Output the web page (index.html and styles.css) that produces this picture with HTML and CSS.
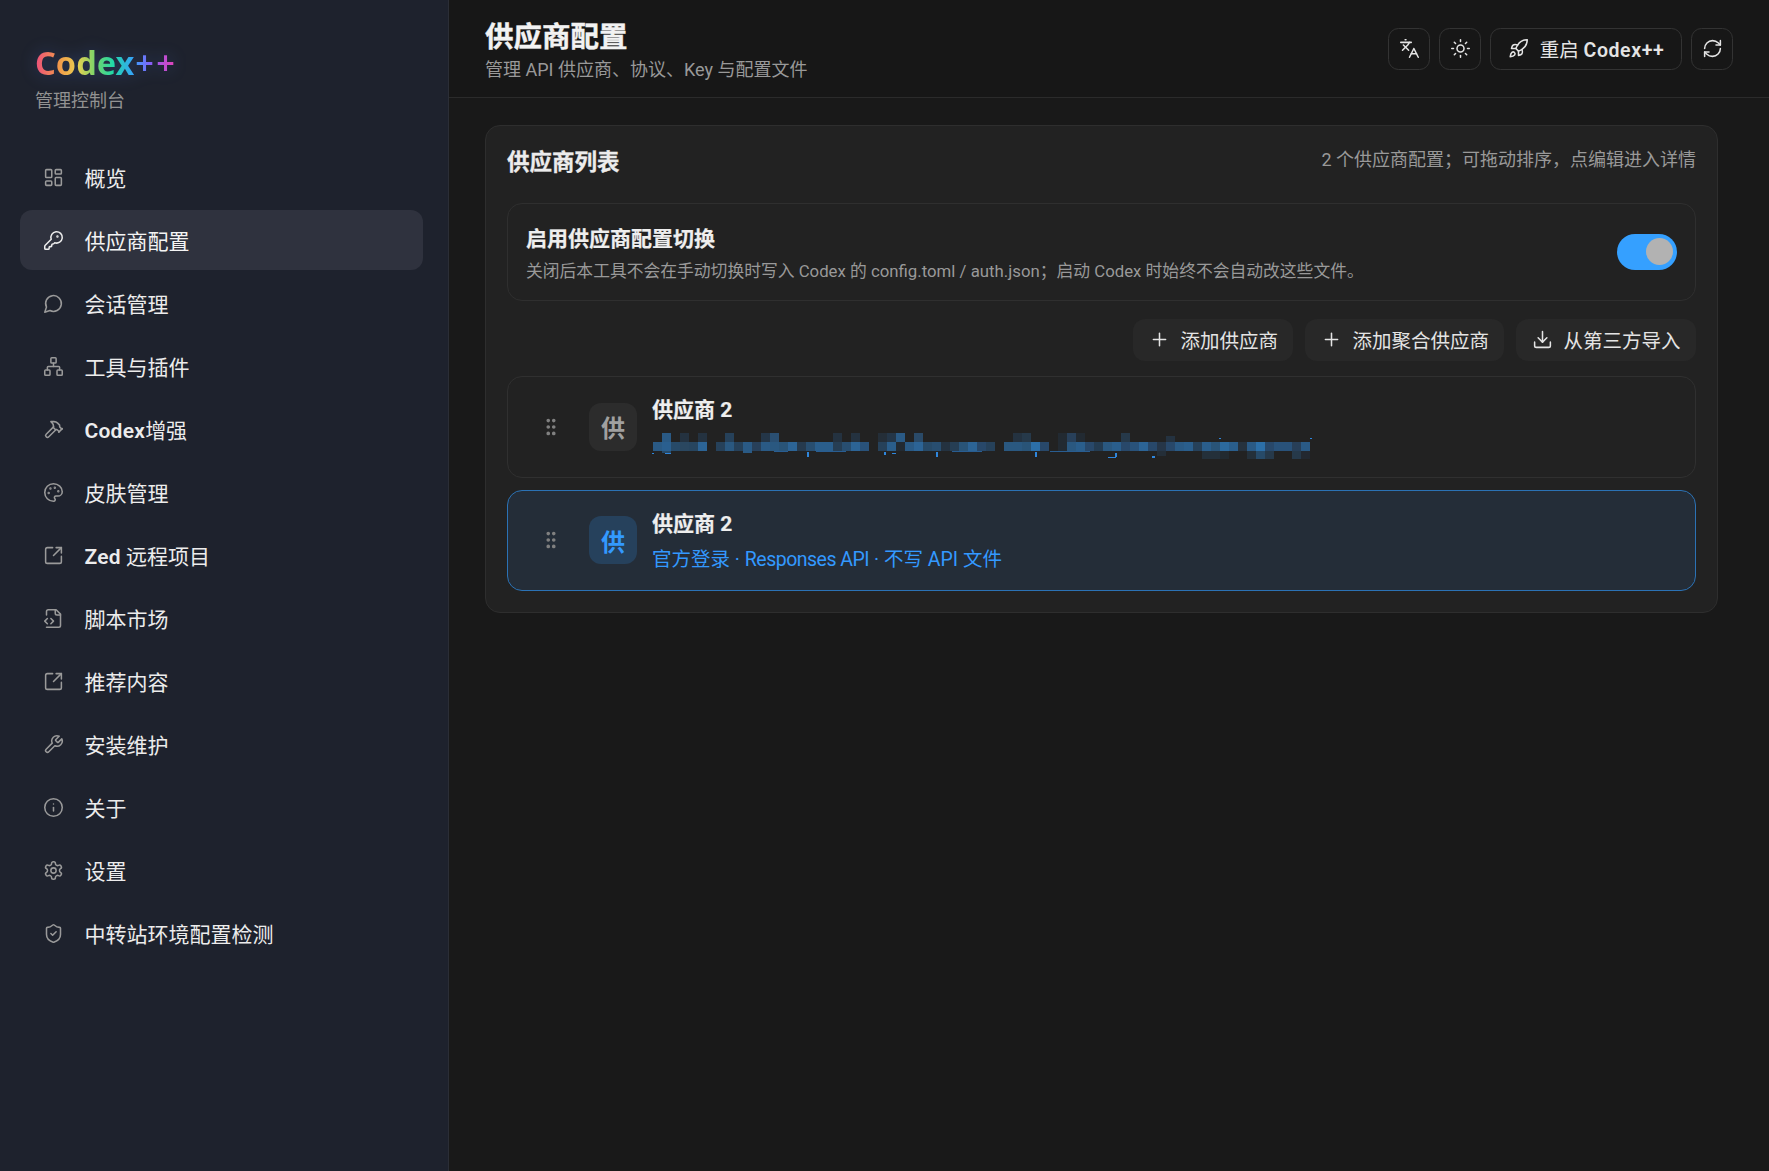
FILE: index.html
```html
<!DOCTYPE html>
<html lang="zh-CN">
<head>
<meta charset="utf-8">
<title>Codex++ 管理控制台</title>
<link rel="stylesheet" href="styles.css">
</head>
<body>
<div class="app">
  <aside class="sidebar">
    <div class="brand">
      <div class="logo">Codex<span class="pp">++</span></div>
      <div class="brand-sub">管理控制台</div>
    </div>
    <nav class="nav">
      <a class="nav-item"><svg class="ico" viewBox="0 0 24 24"><rect width="7" height="9" x="3" y="3" rx="1"/><rect width="7" height="5" x="14" y="3" rx="1"/><rect width="7" height="9" x="14" y="12" rx="1"/><rect width="7" height="5" x="3" y="16" rx="1"/></svg><span>概览</span></a>
      <a class="nav-item active"><svg class="ico" viewBox="0 0 24 24"><path d="M2.586 17.414A2 2 0 0 0 2 18.828V21a1 1 0 0 0 1 1h3a1 1 0 0 0 1-1v-1a1 1 0 0 1 1-1h1a1 1 0 0 0 1-1v-1a1 1 0 0 1 1-1h.172a2 2 0 0 0 1.414-.586l.814-.814a6.5 6.5 0 1 0-4-4z"/><circle cx="16.5" cy="7.5" r=".5" fill="currentColor"/></svg><span>供应商配置</span></a>
      <a class="nav-item"><svg class="ico" viewBox="0 0 24 24"><path d="M7.9 20A9 9 0 1 0 4 16.1L2 22Z"/></svg><span>会话管理</span></a>
      <a class="nav-item"><svg class="ico" viewBox="0 0 24 24"><rect x="16" y="16" width="6" height="6" rx="1"/><rect x="2" y="16" width="6" height="6" rx="1"/><rect x="9" y="2" width="6" height="6" rx="1"/><path d="M5 16v-3a1 1 0 0 1 1-1h12a1 1 0 0 1 1 1v3"/><path d="M12 12V8"/></svg><span>工具与插件</span></a>
      <a class="nav-item"><svg class="ico" viewBox="0 0 24 24"><path d="m15 12-8.373 8.373a1 1 0 1 1-3-3L12 9"/><path d="m18 15 4-4"/><path d="m21.5 11.5-1.914-1.914A2 2 0 0 1 19 8.172V7l-2.26-2.26a6 6 0 0 0-4.202-1.756L9 2.96l.92.82A6.18 6.18 0 0 1 12 8.4V10l2 2h1.172a2 2 0 0 1 1.414.586L18.5 14.5"/></svg><span><b class="lat">Codex</b>增强</span></a>
      <a class="nav-item"><svg class="ico" viewBox="0 0 24 24"><path d="M12 22a1 1 0 0 1 0-20 10 9 0 0 1 10 9 5 5 0 0 1-5 5h-2.25a1.75 1.75 0 0 0-1.4 2.8l.3.4a1.75 1.75 0 0 1-1.4 2.8z"/><circle cx="13.5" cy="6.5" r=".5" fill="currentColor"/><circle cx="17.5" cy="10.5" r=".5" fill="currentColor"/><circle cx="6.5" cy="12.5" r=".5" fill="currentColor"/><circle cx="8.5" cy="7.5" r=".5" fill="currentColor"/></svg><span>皮肤管理</span></a>
      <a class="nav-item"><svg class="ico" viewBox="0 0 24 24"><path d="M21 13v6a2 2 0 0 1-2 2H5a2 2 0 0 1-2-2V5a2 2 0 0 1 2-2h6"/><path d="m21 3-9 9"/><path d="M15 3h6v6"/></svg><span><b class="lat">Zed</b> 远程项目</span></a>
      <a class="nav-item"><svg class="ico" viewBox="0 0 24 24"><path d="M4 22h14a2 2 0 0 0 2-2V7l-5-5H6a2 2 0 0 0-2 2v4"/><path d="M14 2v4a2 2 0 0 0 2 2h4"/><path d="m5 12-3 3 3 3"/><path d="m9 18 3-3-3-3"/></svg><span>脚本市场</span></a>
      <a class="nav-item"><svg class="ico" viewBox="0 0 24 24"><path d="M21 13v6a2 2 0 0 1-2 2H5a2 2 0 0 1-2-2V5a2 2 0 0 1 2-2h6"/><path d="m21 3-9 9"/><path d="M15 3h6v6"/></svg><span>推荐内容</span></a>
      <a class="nav-item"><svg class="ico" viewBox="0 0 24 24"><path d="M14.7 6.3a1 1 0 0 0 0 1.4l1.6 1.6a1 1 0 0 0 1.4 0l3.77-3.77a6 6 0 0 1-7.94 7.94l-6.91 6.91a2.12 2.12 0 0 1-3-3l6.91-6.91a6 6 0 0 1 7.94-7.94l-3.76 3.76z"/></svg><span>安装维护</span></a>
      <a class="nav-item"><svg class="ico" viewBox="0 0 24 24"><circle cx="12" cy="12" r="10"/><path d="M12 16v-4"/><path d="M12 8h.01"/></svg><span>关于</span></a>
      <a class="nav-item"><svg class="ico" viewBox="0 0 24 24"><path d="M12.22 2h-.44a2 2 0 0 0-2 2v.18a2 2 0 0 1-1 1.73l-.43.25a2 2 0 0 1-2 0l-.15-.08a2 2 0 0 0-2.73.73l-.22.38a2 2 0 0 0 .73 2.73l.15.1a2 2 0 0 1 1 1.72v.51a2 2 0 0 1-1 1.74l-.15.09a2 2 0 0 0-.73 2.73l.22.38a2 2 0 0 0 2.73.73l.15-.08a2 2 0 0 1 2 0l.43.25a2 2 0 0 1 1 1.73V20a2 2 0 0 0 2 2h.44a2 2 0 0 0 2-2v-.18a2 2 0 0 1 1-1.73l.43-.25a2 2 0 0 1 2 0l.15.08a2 2 0 0 0 2.73-.73l.22-.39a2 2 0 0 0-.73-2.73l-.15-.08a2 2 0 0 1-1-1.74v-.5a2 2 0 0 1 1-1.74l.15-.09a2 2 0 0 0 .73-2.73l-.22-.38a2 2 0 0 0-2.73-.73l-.15.08a2 2 0 0 1-2 0l-.43-.25a2 2 0 0 1-1-1.73V4a2 2 0 0 0-2-2z"/><circle cx="12" cy="12" r="3"/></svg><span>设置</span></a>
      <a class="nav-item"><svg class="ico" viewBox="0 0 24 24"><path d="M20 13c0 5-3.5 7.5-7.66 8.95a1 1 0 0 1-.67-.01C7.5 20.5 4 18 4 13V6a1 1 0 0 1 1-1c2 0 4.5-1.2 6.24-2.72a1.17 1.17 0 0 1 1.52 0C14.51 3.81 17 5 19 5a1 1 0 0 1 1 1z"/><path d="m9 12 2 2 4-4"/></svg><span>中转站环境配置检测</span></a>
    </nav>
  </aside>

  <main class="main">
    <header class="topbar">
      <div class="top-titles">
        <h1 class="page-title">供应商配置</h1>
        <p class="page-sub">管理 API 供应商、协议、Key 与配置文件</p>
      </div>
      <div class="top-actions">
        <button class="tbtn square"><svg class="ico" viewBox="0 0 24 24"><path d="m5 8 6 6"/><path d="m4 14 6-6 2-3"/><path d="M2 5h12"/><path d="M7 2h1"/><path d="m22 22-5-10-5 10"/><path d="M14 18h6"/></svg></button>
        <button class="tbtn square"><svg class="ico" viewBox="0 0 24 24"><circle cx="12" cy="12" r="4"/><path d="M12 2v2"/><path d="M12 20v2"/><path d="m4.93 4.93 1.41 1.41"/><path d="m17.66 17.66 1.41 1.41"/><path d="M2 12h2"/><path d="M20 12h2"/><path d="m6.34 17.66-1.41 1.41"/><path d="m19.07 4.93-1.41 1.41"/></svg></button>
        <button class="tbtn wide"><svg class="ico" viewBox="0 0 24 24"><path d="M4.5 16.5c-1.5 1.26-2 5-2 5s3.74-.5 5-2c.71-.84.7-2.13-.09-2.91a2.18 2.18 0 0 0-2.91-.09z"/><path d="m12 15-3-3a22 22 0 0 1 2-3.95A12.88 12.88 0 0 1 22 2c0 2.72-.78 7.5-6 11a22.35 22.35 0 0 1-4 2z"/><path d="M9 12H4s.55-3.03 2-4c1.62-1.08 5 0 5 0"/><path d="M12 15v5s3.03-.55 4-2c1.08-1.62 0-5 0-5"/></svg><span>重启 <b class="lat">Codex++</b></span></button>
        <button class="tbtn square"><svg class="ico" viewBox="0 0 24 24"><path d="M3 12a9 9 0 0 1 9-9 9.75 9.75 0 0 1 6.74 2.74L21 8"/><path d="M21 3v5h-5"/><path d="M21 12a9 9 0 0 1-9 9 9.75 9.75 0 0 1-6.74-2.74L3 16"/><path d="M8 16H3v5"/></svg></button>
      </div>
    </header>

    <div class="content">
      <section class="card">
        <div class="card-head">
          <h2 class="card-title">供应商列表</h2>
          <span class="card-note">2 个供应商配置；可拖动排序，点编辑进入详情</span>
        </div>

        <div class="switch-panel">
          <div class="switch-text">
            <div class="switch-title">启用供应商配置切换</div>
            <div class="switch-desc">关闭后本工具不会在手动切换时写入 Codex 的 config.toml / auth.json；启动 Codex 时始终不会自动改这些文件。</div>
          </div>
          <div class="toggle"><span class="knob"></span></div>
        </div>

        <div class="actions">
          <button class="abtn"><svg class="ico" viewBox="0 0 24 24"><path d="M5 12h14"/><path d="M12 5v14"/></svg><span>添加供应商</span></button>
          <button class="abtn"><svg class="ico" viewBox="0 0 24 24"><path d="M5 12h14"/><path d="M12 5v14"/></svg><span>添加聚合供应商</span></button>
          <button class="abtn"><svg class="ico" viewBox="0 0 24 24"><path d="M12 15V3"/><path d="M21 15v4a2 2 0 0 1-2 2H5a2 2 0 0 1-2-2v-4"/><path d="m7 10 5 5 5-5"/></svg><span>从第三方导入</span></button>
        </div>

        <div class="rows">
          <div class="row">
            <svg class="grip" viewBox="0 0 24 24"><circle cx="9" cy="12" r="1"/><circle cx="9" cy="5" r="1"/><circle cx="9" cy="19" r="1"/><circle cx="15" cy="12" r="1"/><circle cx="15" cy="5" r="1"/><circle cx="15" cy="19" r="1"/></svg>
            <div class="avatar">供</div>
            <div class="row-body">
              <div class="row-title">供应商 2</div>
              <svg class="mosaic" viewBox="0 0 662 28" aria-label="已打码的文字">
                <g>
                  <rect x="10" y="1" width="9" height="9" fill="#2a5a85"/><rect x="28" y="1" width="9" height="9" fill="#243240"/><rect x="46" y="1" width="9" height="9" fill="#243240"/><rect x="73" y="1" width="9" height="9" fill="#26415a"/><rect x="109" y="1" width="9" height="9" fill="#243648"/><rect x="118" y="1" width="9" height="9" fill="#2a4f72"/><rect x="181" y="1" width="9" height="9" fill="#243240"/><rect x="199" y="1" width="9" height="9" fill="#243240"/><rect x="226" y="1" width="9" height="9" fill="#242e38"/><rect x="235" y="1" width="9" height="9" fill="#243648"/><rect x="244" y="1" width="9" height="9" fill="#2a5a85"/><rect x="262" y="1" width="9" height="9" fill="#2a4a68"/><rect x="361" y="1" width="9" height="9" fill="#243240"/><rect x="370" y="1" width="9" height="9" fill="#26394a"/><rect x="406" y="1" width="9" height="9" fill="#222a32"/><rect x="415" y="1" width="9" height="9" fill="#28405a"/><rect x="424" y="1" width="9" height="9" fill="#222a32"/><rect x="469" y="1" width="9" height="9" fill="#26394a"/><rect x="514" y="4" width="9" height="6" fill="#243240"/>
                </g>
                <g>
                  <rect x="1" y="10" width="9" height="9" fill="#2a5a85"/><rect x="10" y="10" width="9" height="9" fill="#2a5f8f"/><rect x="19" y="10" width="9" height="9" fill="#274a68"/><rect x="28" y="10" width="9" height="9" fill="#2a4760"/><rect x="37" y="10" width="9" height="9" fill="#27455f"/><rect x="46" y="10" width="9" height="9" fill="#2c6496"/><rect x="64" y="10" width="9" height="9" fill="#26415a"/><rect x="73" y="10" width="9" height="9" fill="#2a5880"/><rect x="82" y="10" width="9" height="9" fill="#26415a"/><rect x="91" y="10" width="9" height="11" fill="#2a5a85"/><rect x="100" y="10" width="9" height="9" fill="#28405a"/><rect x="109" y="10" width="9" height="9" fill="#2a5a85"/><rect x="118" y="10" width="9" height="9" fill="#2a5880"/><rect x="127" y="10" width="9" height="9" fill="#295478"/><rect x="136" y="10" width="9" height="9" fill="#2c6496"/><rect x="145" y="10" width="9" height="9" fill="#263a4e"/><rect x="154" y="10" width="9" height="9" fill="#284e70"/><rect x="163" y="10" width="9" height="9" fill="#2a5e8c"/><rect x="172" y="10" width="9" height="9" fill="#2a5e8c"/><rect x="181" y="10" width="9" height="9" fill="#263e54"/><rect x="190" y="10" width="9" height="9" fill="#284e70"/><rect x="199" y="10" width="9" height="9" fill="#2c6496"/><rect x="208" y="10" width="9" height="9" fill="#29527a"/><rect x="226" y="10" width="9" height="9" fill="#26415a"/><rect x="235" y="10" width="9" height="9" fill="#2a5e8c"/><rect x="244" y="10" width="9" height="9" fill="#222a32"/><rect x="253" y="10" width="9" height="9" fill="#2a5a85"/><rect x="262" y="10" width="9" height="9" fill="#2c6496"/><rect x="271" y="10" width="9" height="9" fill="#274a68"/><rect x="280" y="10" width="9" height="9" fill="#284e70"/><rect x="289" y="10" width="9" height="9" fill="#243240"/><rect x="298" y="10" width="9" height="9" fill="#263e54"/><rect x="307" y="10" width="9" height="9" fill="#295478"/><rect x="316" y="10" width="9" height="9" fill="#2c6496"/><rect x="325" y="10" width="9" height="9" fill="#28486a"/><rect x="334" y="10" width="9" height="9" fill="#26415a"/><rect x="352" y="10" width="9" height="9" fill="#2a5880"/><rect x="361" y="10" width="9" height="9" fill="#2a5880"/><rect x="370" y="10" width="9" height="9" fill="#295478"/><rect x="379" y="10" width="9" height="9" fill="#2c6fa8"/><rect x="388" y="10" width="9" height="9" fill="#28486a"/><rect x="406" y="10" width="9" height="9" fill="#222a32"/><rect x="415" y="10" width="9" height="9" fill="#2a5880"/><rect x="424" y="10" width="9" height="9" fill="#2a5e8c"/><rect x="433" y="10" width="9" height="9" fill="#28486a"/><rect x="442" y="10" width="9" height="9" fill="#243c52"/><rect x="451" y="10" width="9" height="9" fill="#2a5880"/><rect x="460" y="10" width="9" height="9" fill="#2a5e8c"/><rect x="469" y="10" width="9" height="9" fill="#28486a"/><rect x="478" y="10" width="9" height="9" fill="#29527a"/><rect x="487" y="10" width="9" height="9" fill="#2c6496"/><rect x="496" y="10" width="9" height="9" fill="#28486a"/><rect x="505" y="10" width="9" height="9" fill="#263648"/><rect x="514" y="10" width="9" height="9" fill="#28486a"/><rect x="523" y="10" width="9" height="9" fill="#2a5a85"/><rect x="532" y="10" width="9" height="9" fill="#2a5e8c"/><rect x="541" y="10" width="9" height="9" fill="#26415a"/><rect x="550" y="10" width="9" height="9" fill="#2a5e8c"/><rect x="559" y="10" width="9" height="9" fill="#295478"/><rect x="568" y="10" width="9" height="9" fill="#2c6a9e"/><rect x="577" y="10" width="9" height="9" fill="#2a5e8c"/><rect x="586" y="10" width="9" height="9" fill="#26323e"/><rect x="595" y="10" width="9" height="9" fill="#2a5a85"/><rect x="604" y="10" width="9" height="9" fill="#2c6fa8"/><rect x="613" y="10" width="9" height="9" fill="#28486a"/><rect x="622" y="10" width="9" height="9" fill="#29527a"/><rect x="631" y="10" width="9" height="9" fill="#29527a"/><rect x="640" y="10" width="9" height="9" fill="#283f58"/><rect x="649" y="10" width="9" height="9" fill="#2a5a85"/>
                </g>
                <g>
                  <rect x="10" y="19" width="9" height="2" fill="#274a68"/><rect x="505" y="19" width="9" height="5" fill="#242e38"/><rect x="550" y="19" width="9" height="8" fill="#24303a"/><rect x="559" y="19" width="9" height="8" fill="#24303a"/><rect x="568" y="19" width="9" height="8" fill="#222a30"/><rect x="595" y="19" width="9" height="8" fill="#24303a"/><rect x="604" y="19" width="9" height="8" fill="#274a68"/><rect x="613" y="19" width="9" height="8" fill="#26394a"/><rect x="640" y="19" width="9" height="8" fill="#26394a"/><rect x="649" y="19" width="9" height="8" fill="#232830"/>
                </g>
                <g fill="#2f86dc">
                  <rect x="0" y="21" width="2" height="1"/><rect x="13" y="21" width="6" height="1"/><rect x="155" y="20" width="2" height="5"/><rect x="232" y="20" width="2" height="3"/><rect x="240" y="21" width="4" height="1"/><rect x="284" y="20" width="2" height="5"/><rect x="383" y="20" width="2" height="5"/><rect x="456" y="25" width="8" height="1"/><rect x="463" y="21" width="2" height="4"/><rect x="500" y="24" width="3" height="2"/><rect x="567" y="6" width="2" height="1"/><rect x="658" y="6" width="2" height="1"/>
                  <rect x="122" y="19" width="14" height="1" opacity=".6"/><rect x="164" y="19" width="30" height="1" opacity=".6"/><rect x="300" y="19" width="30" height="1" opacity=".6"/><rect x="398" y="19" width="40" height="1" opacity=".6"/>
                </g>
              </svg>
            </div>
          </div>

          <div class="row selected">
            <svg class="grip" viewBox="0 0 24 24"><circle cx="9" cy="12" r="1"/><circle cx="9" cy="5" r="1"/><circle cx="9" cy="19" r="1"/><circle cx="15" cy="12" r="1"/><circle cx="15" cy="5" r="1"/><circle cx="15" cy="19" r="1"/></svg>
            <div class="avatar">供</div>
            <div class="row-body">
              <div class="row-title">供应商 2</div>
              <div class="row-sub">官方登录 · <span class="tight">Responses API</span> · 不写 API 文件</div>
            </div>
          </div>
        </div>
      </section>
    </div>
  </main>
</div>
</body>
</html>
```
FILE: styles.css
```css
* { box-sizing: border-box; }

html, body {
  margin: 0;
  height: 100%;
  background: #191919;
  color: #f0f0f0;
  font-family: Roboto, "Noto Sans CJK SC", sans-serif;
}

.app {
  display: flex;
  height: 1171px;
  overflow: hidden;
}

.ico {
  width: 21px;
  height: 21px;
  flex: none;
  fill: none;
  stroke: currentColor;
  stroke-width: 1.75;
  stroke-linecap: round;
  stroke-linejoin: round;
}

.lat {
  font-weight: 600;
  letter-spacing: .25px;
}

.tight { letter-spacing: -.5px; }

/* sidebar */
.sidebar {
  width: 449px;
  flex: none;
  background: #1e222d;
  border-right: 1px solid #2b2e36;
}

.brand {
  padding: 40px 0 0 35px;
  height: 147px;
}

.logo {
  display: inline-block;
  font-family: "Noto Sans", sans-serif;
  font-size: 32.5px;
  line-height: 46px;
  font-weight: 700;
  background: linear-gradient(90deg, #ec4e7c 0%, #f2994a 17%, #e8d050 30%, #72d46c 43%, #20d8a8 55%, #38a0ff 70%, #8a5cf6 82%, #ec40b0 100%);
  -webkit-background-clip: text;
  background-clip: text;
  color: transparent;
  filter: drop-shadow(0 0 8px rgba(80, 130, 255, .28));
}

.pp { letter-spacing: 2.5px; margin-left: 1px; font-weight: 600; }

.brand-sub {
  margin-top: 1px;
  font-size: 18px;
  line-height: 27px;
  color: #929292;
}

.nav {
  display: flex;
  flex-direction: column;
  gap: 3px;
  padding: 0 25px 0 20px;
}

.nav-item {
  display: flex;
  align-items: center;
  gap: 20.5px;
  height: 60px;
  padding-left: 23px;
  border-radius: 12px;
  font-size: 21px;
  color: #ececec;
}

.nav-item .ico { color: #9a9a9a; }

.nav-item.active {
  background: #2f323e;
  color: #f4f4f4;
}

.nav-item.active .ico { color: #ececec; }

/* main */
.main {
  flex: 1;
  min-width: 0;
}

.topbar {
  display: flex;
  align-items: center;
  justify-content: space-between;
  height: 98px;
  padding: 0 36px;
  background: #171717;
  border-bottom: 1px solid #2b2b2b;
}

.page-title {
  margin: 4px 0 0;
  font-size: 28.5px;
  line-height: 36px;
  font-weight: 700;
  color: #f2f2f2;
  -webkit-text-stroke: .4px #f2f2f2;
}

.page-sub {
  margin: 2px 0 0;
  font-size: 18px;
  line-height: 24px;
  color: #999;
}

.top-actions {
  display: flex;
  gap: 9px;
}

.tbtn {
  display: flex;
  align-items: center;
  justify-content: center;
  height: 42px;
  padding: 0;
  background: transparent;
  border: 1px solid #333;
  border-radius: 10.5px;
  color: #e4e4e4;
  font: inherit;
  font-size: 19.5px;
}

.tbtn.square { width: 42px; }

.tbtn.wide {
  width: 192px;
  gap: 11px;
}

.tbtn .lat { letter-spacing: .6px; }

.content {
  padding: 27px 51px 0 36px;
}

.card {
  background: #222;
  border: 1px solid #2e2e2e;
  border-radius: 15px;
  padding: 21px;
}

.card-head {
  display: flex;
  align-items: flex-start;
  justify-content: space-between;
  height: 56px;
}

.card-title {
  margin: 1px 0 0;
  font-size: 22.5px;
  line-height: 28px;
  font-weight: 700;
  color: #ececec;
  -webkit-text-stroke: .3px #ececec;
}

.card-note {
  margin-top: 1px;
  font-size: 18px;
  line-height: 24px;
  color: #999;
}

.switch-panel {
  display: flex;
  align-items: center;
  justify-content: space-between;
  height: 97.5px;
  padding: 0 18px;
  border: 1px solid #2f2f2f;
  border-radius: 15px;
}

.switch-text { padding-top: 4px; }

.switch-title {
  font-size: 21px;
  line-height: 30px;
  font-weight: 700;
  color: #eee;
  -webkit-text-stroke: .2px #eee;
}

.switch-desc {
  margin-top: 5px;
  font-size: 16.8px;
  line-height: 24px;
  color: #999;
}

.toggle {
  display: flex;
  align-items: center;
  justify-content: flex-end;
  width: 60px;
  height: 36px;
  padding-right: 4px;
  border-radius: 18px;
  background: #35a0ff;
}

.knob {
  width: 27px;
  height: 27px;
  border-radius: 50%;
  background: #b2b2b2;
}

.actions {
  display: flex;
  justify-content: flex-end;
  gap: 12px;
  margin-top: 18px;
}

.abtn {
  display: flex;
  align-items: center;
  gap: 10.5px;
  height: 42px;
  padding: 0 15.5px;
  background: #282828;
  border: 0;
  border-radius: 12px;
  color: #e4e4e4;
  font: inherit;
  font-size: 19.5px;
}

.rows {
  display: flex;
  flex-direction: column;
  gap: 12px;
  margin-top: 15.5px;
}

.row {
  display: flex;
  align-items: center;
  height: 101.5px;
  padding-left: 31.5px;
  border: 1px solid #303030;
  border-radius: 15px;
}

.row.selected {
  background: #242d38;
  border-color: #2b72b5;
}

.grip {
  width: 22px;
  height: 22px;
  flex: none;
  fill: #808080;
  stroke: #808080;
  stroke-width: 2;
}

.avatar {
  display: flex;
  align-items: center;
  justify-content: center;
  width: 48px;
  height: 48px;
  flex: none;
  margin-left: 27.5px;
  border-radius: 12px;
  background: #2c2c2c;
  color: #a0a0a0;
  font-size: 24px;
  font-weight: 700;
}

.selected .avatar {
  background: #26415c;
  color: #3399ff;
}

.row-body {
  margin-left: 15px;
  min-width: 0;
  padding-top: 2px;
}

.selected .row-body { padding-top: 3px; }

.row-title {
  font-size: 21px;
  line-height: 30px;
  font-weight: 700;
  color: #eee;
  -webkit-text-stroke: .2px #eee;
}

.row-sub {
  margin-top: 6.5px;
  font-size: 19.5px;
  line-height: 30px;
  color: #3399ff;
}

.mosaic {
  display: block;
  width: 662px;
  height: 28px;
  margin-top: 7px;
  shape-rendering: crispEdges;
}
```
